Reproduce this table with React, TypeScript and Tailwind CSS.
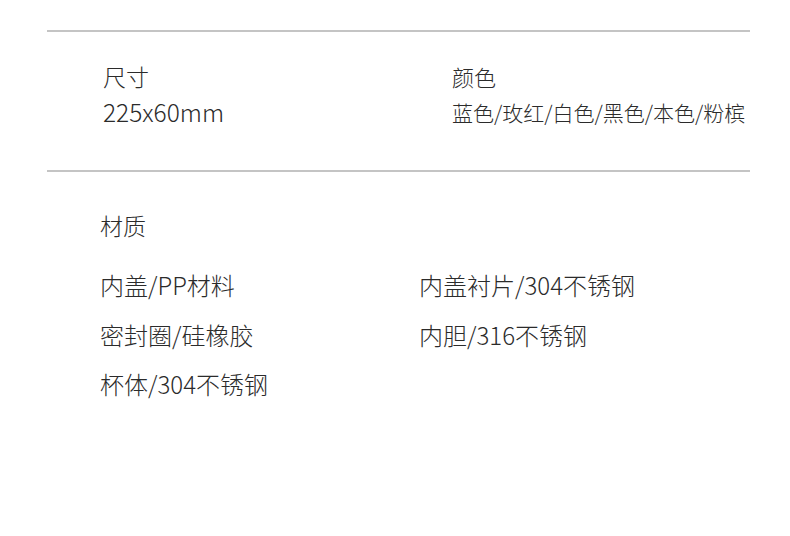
import type React from 'react';

const materials = [
  ['内盖/PP材料', '内盖衬片/304不锈钢'],
  ['密封圈/硅橡胶', '内胆/316不锈钢'],
  ['杯体/304不锈钢', ''],
];

const App: React.FC = () => {
  return (
    <div className="w-[790px] h-[536px] bg-white text-[#2b2b2b] font-light font-['Noto_Sans_CJK_SC',sans-serif]">
      <div className="ml-[47px] w-[703px] pt-[30px]">
        <div className="h-[2px] bg-[#c4c4c4]" />

        {/* Size / colour */}
        <div className="flex pl-[56px] pt-[26px] pb-[40px]">
          <div className="w-[349px]">
            <div className="text-[23px] leading-[36px]">尺寸</div>
            <div className="text-[24.5px] leading-[36px]">225x60mm</div>
          </div>
          <div>
            <div className="text-[22px] leading-[36px]">颜色</div>
            <div className="text-[21px] leading-[36px]">蓝色/玫红/白色/黑色/本色/粉槟</div>
          </div>
        </div>

        <div className="h-[2px] bg-[#c4c4c4]" />

        {/* Material */}
        <div className="pl-[53px] pt-[35px]">
          <div className="text-[23px] leading-[36px]">材质</div>
          <div className="mt-[24px] flex flex-col gap-[13.5px]">
            {materials.map(([a, b]) => (
              <div key={a} className="flex text-[24px] leading-[36px]">
                <div className="w-[319px]">{a}</div>
                <div>{b}</div>
              </div>
            ))}
          </div>
        </div>
      </div>
    </div>
  );
};

export default App;
